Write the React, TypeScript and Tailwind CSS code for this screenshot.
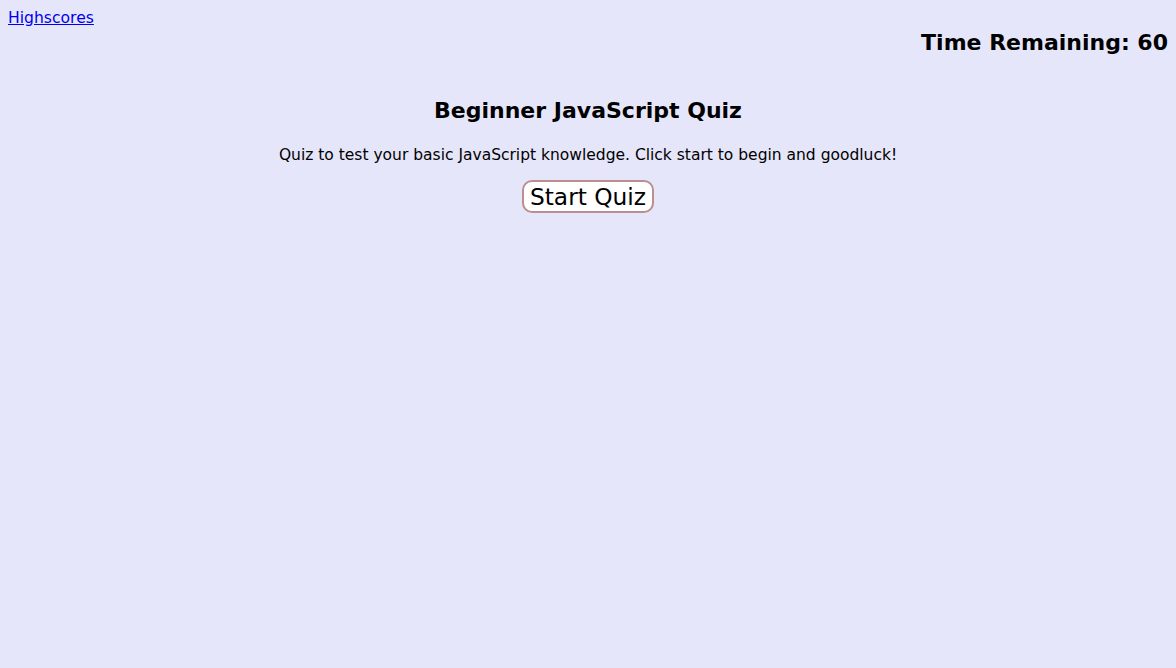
import React from "react";

export default function App() {
  return (
    <div className="min-h-[668px] w-full bg-[#e6e6fa] text-black">
      <div className="font-['DejaVu_Sans',sans-serif]">
        <div className="flex justify-between px-2">
          <a href="#" className="text-[15.6px] leading-[18px] pt-[9px] text-[#0000ee] underline">Highscores</a>
          <div className="pt-[30px] text-[22px] leading-[26px] font-bold">Time Remaining: 60</div>
        </div>
        <div className="flex flex-col items-center mt-[40px]">
          <h1 className="text-[22px] leading-[30px] font-bold">Beginner JavaScript Quiz</h1>
          <p className="text-[15.5px] leading-[20px] mt-[19px]">Quiz to test your basic JavaScript knowledge. Click start to begin and goodluck!</p>
          <button className="mt-[15px] bg-white border-2 border-[#bc8f8f] rounded-[10px] text-[23.3px] leading-[27px] px-[6px] py-[1px]">Start Quiz</button>
        </div>
      </div>
    </div>
  );
}
